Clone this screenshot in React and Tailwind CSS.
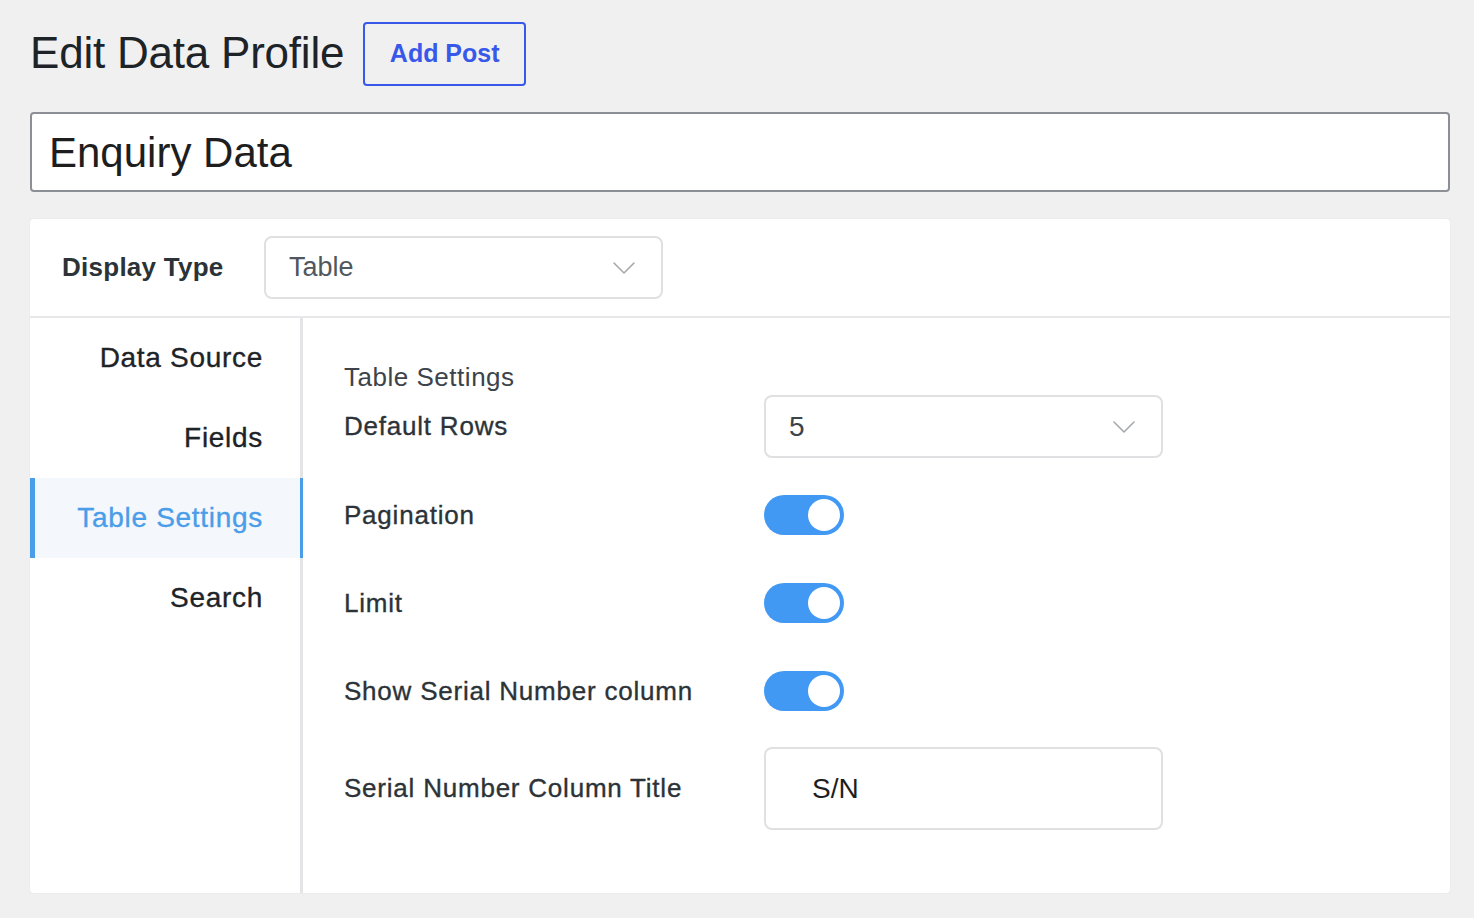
import { useState } from 'react';

function Chevron() {
  return (
    <svg width="22" height="12" viewBox="0 0 22 12" fill="none" className="shrink-0">
      <polyline points="1,1 11,11 21,1" stroke="#a7aaad" strokeWidth="1.6" strokeLinecap="round" strokeLinejoin="round" />
    </svg>
  );
}

function Select({ value, width = 'w-[399px]', textClass }) {
  return (
    <div className={`${width} h-[63px] bg-white border-2 border-[#e0e0e2] rounded-[8px] pl-[23px] pr-[26px] flex items-center justify-between`}>
      <span className={textClass}>{value}</span>
      <Chevron />
    </div>
  );
}

function Toggle({ on, onClick }) {
  return (
    <button
      onClick={onClick}
      className={`w-[80px] h-[40px] rounded-full p-[4px] flex items-center ${on ? 'bg-[#4299f3] justify-end' : 'bg-[#c3c4c7] justify-start'}`}
    >
      <span className="w-[32px] h-[32px] rounded-full bg-white block" />
    </button>
  );
}

function Row({ label, className = '', children }) {
  return (
    <div className={`flex items-center ${className}`}>
      <span className="w-[420px] text-[26px] tracking-[0.03em] [-webkit-text-stroke:0.35px]">{label}</span>
      {children}
    </div>
  );
}

const tabs = ['Data Source', 'Fields', 'Table Settings', 'Search'];

export default function App() {
  const [active, setActive] = useState('Table Settings');
  const [toggles, setToggles] = useState({ pagination: true, limit: true, serial: true });

  const flip = (key) => setToggles((t) => ({ ...t, [key]: !t[key] }));

  return (
    <div className="min-h-screen bg-[#f0f0f1] pl-[30px] pr-[24px] pt-[22px] font-['Liberation_Sans',Arial,sans-serif]">
      {/* page heading */}
      <div className="flex items-center gap-[19px] h-[64px]">
        <h1 className="text-[44px] leading-none text-[#1d2327] tracking-[-0.005em] -mt-[2px]">Edit Data Profile</h1>
        <button className="w-[163px] h-[64px] border-2 border-[#3858e9] rounded-[4px] text-[25px] font-semibold text-[#3858e9]">
          Add Post
        </button>
      </div>

      {/* title field */}
      <div className="mt-[26px] h-[80px] bg-white border-2 border-[#8c8f94] rounded-[4px] pl-[17px] flex items-center text-[42px] text-[#1e1e1e]">
        Enquiry Data
      </div>

      {/* settings panel */}
      <div className="mt-[27px] bg-white rounded-[4px] shadow-[0_0_0_1px_#ececee] flex flex-col h-[674px]">
        <div className="h-[99px] flex items-center pl-[32px] border-b-2 border-[#e8e8ea] shrink-0">
          <span className="w-[202px] text-[26px] font-bold text-[#2c3338] tracking-[0.01em]">Display Type</span>
          <Select value="Table" textClass="text-[27px] text-[#50575e]" />
        </div>

        <div className="flex flex-1">
          <nav className="w-[273px] flex flex-col shrink-0">
            {tabs.map((tab) => {
              const isActive = tab === active;
              return (
                <button
                  key={tab}
                  onClick={() => setActive(tab)}
                  className={`h-[80px] flex items-center justify-end pr-[37px] text-[28px] tracking-[0.025em] [-webkit-text-stroke:0.35px] border-r-[3px] ${
                    isActive
                      ? 'bg-[#f4f7fb] border-l-[5px] border-l-[#4a9de9] border-r-[#4a9de9] text-[#4a9de9]'
                      : 'border-r-[#e4e4e7] text-[#1d2327]'
                  }`}
                >
                  {tab}
                </button>
              );
            })}
            <div className="flex-1 border-r-[3px] border-[#e4e4e7]" />
          </nav>

          <div className="flex-1 pl-[41px] pt-[45px] text-[#2c3338]">
            <div className="text-[26px] leading-[28px] tracking-[0.02em] text-[#3c434a]">Table Settings</div>

            <Row label="Default Rows" className="mt-[4px]">
              <Select value="5" textClass="text-[28px] text-[#3c434a]" />
            </Row>

            <Row label="Pagination" className="mt-[37px]">
              <Toggle on={toggles.pagination} onClick={() => flip('pagination')} />
            </Row>

            <Row label="Limit" className="mt-[48px]">
              <Toggle on={toggles.limit} onClick={() => flip('limit')} />
            </Row>

            <Row label="Show Serial Number column" className="mt-[48px]">
              <Toggle on={toggles.serial} onClick={() => flip('serial')} />
            </Row>

            <Row label="Serial Number Column Title" className="mt-[36px]">
              <div className="w-[399px] h-[83px] border-2 border-[#e0e0e2] rounded-[8px] pl-[46px] flex items-center text-[28px] text-[#1e1e1e]">
                S/N
              </div>
            </Row>
          </div>
        </div>
      </div>
    </div>
  );
}
